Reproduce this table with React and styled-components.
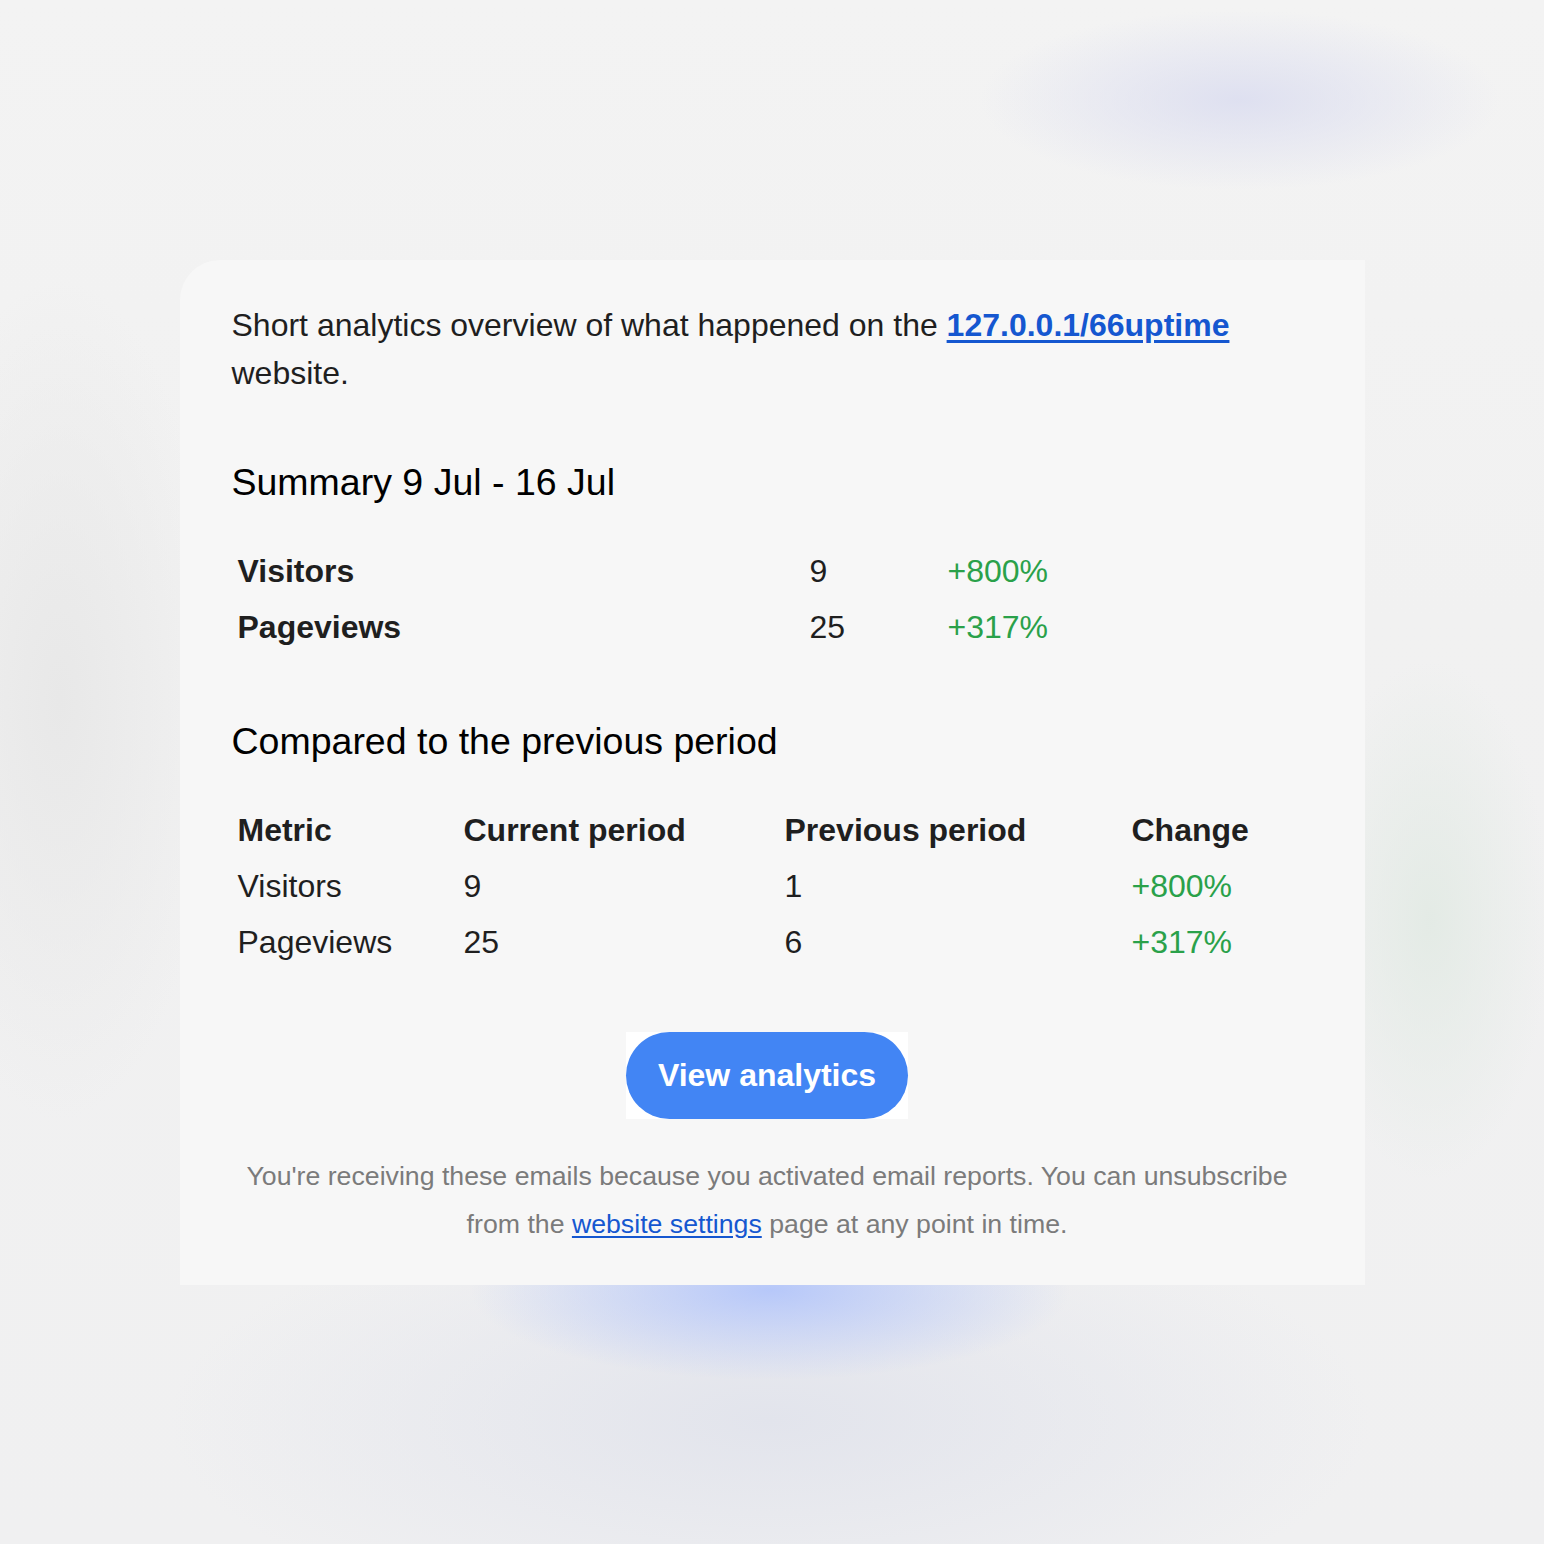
import React from 'react'
import styled, { createGlobalStyle } from 'styled-components'

const GlobalStyle = createGlobalStyle`
    html, body {
        margin:0;
        padding:0;
    }
    body {
        font-family:"Liberation Sans", Arial, sans-serif;
        background:#f2f2f2;
    }
`

const Page = styled.div`
    min-height:1544px;
    box-sizing:border-box;
    padding-top:260px;
    background:
        radial-gradient(ellipse 260px 90px at 1240px 100px, rgba(220,222,240,0.9), rgba(220,222,240,0) 100%),
        radial-gradient(ellipse 300px 90px at 770px 1290px, rgba(180,198,250,0.95), rgba(200,210,245,0) 100%),
        radial-gradient(ellipse 600px 220px at 770px 1420px, rgba(226,228,236,1), rgba(226,228,236,0) 100%),
        radial-gradient(ellipse 120px 260px at 1430px 920px, rgba(226,234,228,0.9), rgba(226,234,228,0) 100%),
        radial-gradient(ellipse 160px 420px at 60px 700px, rgba(232,232,232,1), rgba(232,232,232,0) 100%),
        linear-gradient(#f3f3f3, #f1f1f1 40%, #f0f0f1);
`

const Card = styled.div`
    width:1185px;
    margin:0 auto;
    box-sizing:border-box;
    padding:41px 62px 37px 52px;
    background:#f7f7f7;
    border-radius:40px 0 0 0;
    color:#1f1f1f;
`

const Intro = styled.p`
    margin:0;
    font-size:32px;
    line-height:48px;
`

const Link = styled.a`
    color:#1557d0;
    font-weight:${p => (p.$bold ? 700 : 400)};
    text-decoration:underline;
    text-underline-offset:${p => (p.$bold ? '4px' : '3px')};
`

const Heading = styled.h2`
    margin:${p => p.$top}px 0 0;
    font-size:37.5px;
    line-height:44px;
    font-weight:400;
    color:#000;
`

const Table = styled.div`
    margin-top:39px;
    display:grid;
    grid-template-columns:${p => p.$cols};
    font-size:32px;
    line-height:56px;
`

const Cell = styled.div`
    padding-left:6px;
    font-weight:${p => (p.$bold ? 700 : 400)};
    color:${p => (p.$up ? '#2aa14a' : '#1f1f1f')};
    white-space:nowrap;
`

const ButtonRow = styled.div`
    margin-top:62px;
    display:flex;
    justify-content:center;
`

const ButtonCell = styled.div`
    background:#fff;
`

const Button = styled.a`
    display:block;
    height:87px;
    box-sizing:border-box;
    padding:0 32px;
    border-radius:44px;
    background:#4285f4;
    color:#fff;
    font-size:32px;
    font-weight:700;
    line-height:87px;
    text-decoration:none;
`

const Footer = styled.p`
    margin:33px 0 0;
    text-align:center;
    font-size:26.7px;
    line-height:48px;
    color:#7b7b7b;
`

const summary = [
    { label: 'Visitors', value: '9', change: '+800%' },
    { label: 'Pageviews', value: '25', change: '+317%' },
]

const compare = [
    { label: 'Visitors', current: '9', previous: '1', change: '+800%' },
    { label: 'Pageviews', current: '25', previous: '6', change: '+317%' },
]

const App = () => {
  return (
    <Page>
        <GlobalStyle />
        <Card>
            <Intro>
                Short analytics overview of what happened on the{' '}
                <Link $bold href="#">127.0.0.1/66uptime</Link> website.
            </Intro>

            <Heading $top={63}>Summary 9 Jul - 16 Jul</Heading>
            <Table $cols="572px 138px 1fr">
                {summary.map(row => (
                    <React.Fragment key={row.label}>
                        <Cell $bold>{row.label}</Cell>
                        <Cell>{row.value}</Cell>
                        <Cell $up>{row.change}</Cell>
                    </React.Fragment>
                ))}
            </Table>

            <Heading $top={64}>Compared to the previous period</Heading>
            <Table $cols="226px 321px 347px 1fr">
                <Cell $bold>Metric</Cell>
                <Cell $bold>Current period</Cell>
                <Cell $bold>Previous period</Cell>
                <Cell $bold>Change</Cell>
                {compare.map(row => (
                    <React.Fragment key={row.label}>
                        <Cell>{row.label}</Cell>
                        <Cell>{row.current}</Cell>
                        <Cell>{row.previous}</Cell>
                        <Cell $up>{row.change}</Cell>
                    </React.Fragment>
                ))}
            </Table>

            <ButtonRow>
                <ButtonCell>
                    <Button href="#">View analytics</Button>
                </ButtonCell>
            </ButtonRow>

            <Footer>
                You're receiving these emails because you activated email reports. You can unsubscribe
                <br />
                from the <Link href="#">website settings</Link> page at any point in time.
            </Footer>
        </Card>
    </Page>
  )
}

export default App
